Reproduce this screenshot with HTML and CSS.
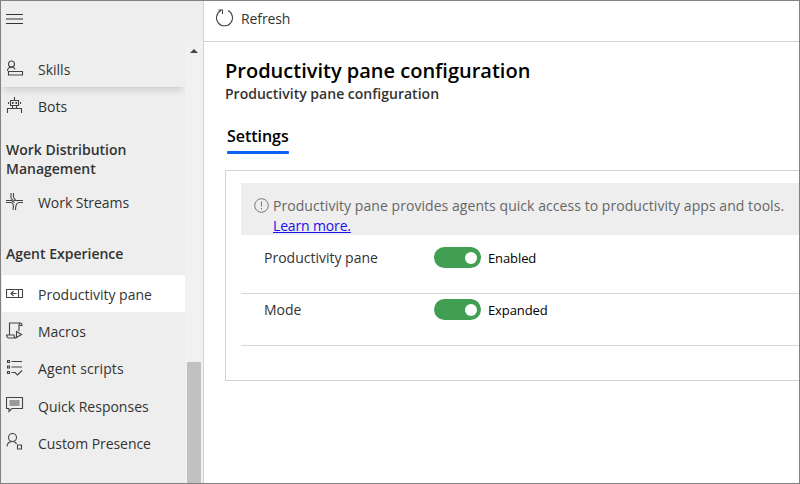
FILE: index.html
```html
<!DOCTYPE html>
<html lang="en">
<head>
<meta charset="utf-8">
<title>Productivity pane configuration</title>
<link rel="stylesheet" href="styles.css">
</head>
<body>
<div class="app">
  <aside class="sidebar">
    <div class="menu-bar">
      <svg class="burger" width="18" height="12" viewBox="0 0 18 12"><path d="M0 1.500h17M0 6h17M0 10.500h17" stroke="#333" stroke-width="1.2"/></svg>
    </div>
    <div class="side-body">
      <nav class="nav">
        <a class="item pinned"><svg class="icon" viewBox="0 0 18 18"><circle cx="5.500" cy="4" r="3"/><path d="M1.500 11C1.500 8.500 3 7.200 5.500 7.200c1.800 0 3 .7 3.700 2"/><path d="M2.500 11.500h14v3.500h-14z"/></svg><span>Skills</span></a>
        <a class="item"><svg class="icon" viewBox="0 0 18 18"><path d="M8.500 0v3.500M4.500 3.500h8v5h-8zM2.500 5v2M14.500 5v2M1.500 16v-4.500h14V16M6.500 8.500v3M10.500 8.500v3"/><path stroke-width="1.800" d="M6 6h1.500M9.500 6h1.500"/></svg><span>Bots</span></a>
        <h2 class="group first">Work Distribution<br>Management</h2>
        <a class="item"><svg class="icon" viewBox="0 0 18 18"><path d="M0 7.500h5.500l3 2M0 9.500h5q3.500.5 2 7.500M5 0v4.500q.5 3 4.500 3H17M7.500 0v3.500q0 1.500 2 3.500M17 9.500h-4q-3.500.5-3.500 7.500"/></svg><span class="wide-less">Work Streams</span></a>
        <h2 class="group second">Agent Experience</h2>
        <a class="item selected"><svg class="icon" viewBox="0 0 18 18"><path d="M.5 4.500h16v8H.5zM12.500 4.500v8M5 8.500h5.500M7.500 6L5 8.500 7.500 11"/></svg><span>Productivity pane</span></a>
        <a class="item"><svg class="icon" viewBox="0 0 18 18"><path d="M3.500 12.500V1H14q2 0 2 2.500H13V9M13 3.500Q13 1 14.500 1M9 16H3q-2 0-2.500-3H8q0 3 2 3M10.500 9.500v6l5-3z"/></svg><span>Macros</span></a>
        <a class="item"><svg class="icon" viewBox="0 0 18 18"><path d="M1.500 1.500h2v2h-2zM1.500 7h2v2h-2zM1.500 12.500h2v2h-2zM5.500 2.500H16M5.500 8H16M5.500 13.500h3.500l2.500 2.500L16 11.500"/></svg><span class="agent-scripts">Agent scripts</span></a>
        <a class="item"><svg class="icon" viewBox="0 0 18 18"><path d="M.5 1.500h16v11H6L3 15.500v-3H.5zM3.500 5h10M3.500 7h10M3.500 9h10"/></svg><span>Quick Responses</span></a>
        <a class="item"><svg class="icon" viewBox="0 0 18 18"><circle cx="6.500" cy="4.500" r="4"/><path d="M1 13.500Q1.500 8.500 6.500 8.500q3 0 4 2.500M11.500 12h4v4h-4z"/></svg><span class="wide-less">Custom Presence</span></a>
      </nav>
      <div class="scrollbar"><div class="arrow"></div><div class="thumb"></div></div>
    </div>
  </aside>
  <main class="main">
    <header class="toolbar">
      <svg width="18" height="18" viewBox="0 0 18 18" class="refresh"><path d="M12 1.600A8 8 0 1 1 5 1.600M2.500 1H6.500V5"/></svg>
      <span class="refresh-label">Refresh</span>
    </header>
    <section class="content">
      <h1>Productivity pane configuration</h1>
      <p class="subtitle">Productivity pane configuration</p>
      <div class="tab">Settings</div>
      <div class="card">
        <div class="info">
          <svg width="15" height="15" viewBox="0 0 15 15" class="alert"><circle cx="7.500" cy="7.500" r="6.800"/><path d="M7.500 3.500v5M7.500 10v1.500"/></svg>
          <div><span class="message">Productivity pane provides agents quick access to productivity apps and tools.</span><br><a class="link">Learn more.</a></div>
        </div>
        <div class="row"><div class="label">Productivity pane</div><div class="toggle"><i></i></div><div class="state">Enabled</div></div>
        <div class="row"><div class="label">Mode</div><div class="toggle"><i></i></div><div class="state">Expanded</div></div>
      </div>
    </section>
  </main>
</div>
</body>
</html>
```
FILE: styles.css
```css
* { box-sizing: border-box; }
body { margin: 0; font-family: "Open Sans", "Noto Sans", sans-serif; font-size: 14px; color: #333; background: #fff; }
h1, h2, p { margin: 0; }
span { white-space: nowrap; }
.app { display: flex; width: 800px; height: 484px; border: 1px solid #828282; overflow: hidden; }
.sidebar { width: 203px; flex: none; background: #eee; border-right: 1px solid #d2d2d2; display: flex; flex-direction: column; }
.menu-bar { height: 40px; padding: 12px 0 0 5px; flex: none; }
.burger { display: block; }
.side-body { flex: 1; display: flex; }
.nav { width: 184px; padding-top: 9px; }
.item { display: flex; align-items: center; height: 37.200px; padding-left: 5px; gap: 14px; }
.item span { padding-top: 2px; }
.icon { width: 18px; height: 18px; flex: none; fill: none; stroke: #444; stroke-width: 1.100; }
.pinned { box-shadow: 0 5px 7px -2px rgba(0,0,0,.14); }
.selected { background: #fff; margin-left: 1px; padding-left: 4px; }
.wide-less { letter-spacing: -.06px; }
.agent-scripts { letter-spacing: .1px; }
.group { font-size: 14px; font-weight: 600; line-height: 19.500px; padding-left: 5px; }
.first { padding-top: 15.500px; height: 58.600px; }
.second { padding-top: 23.500px; height: 54.800px; }
.scrollbar { width: 18px; background: #f1f1f1; display: flex; flex-direction: column; justify-content: space-between; align-items: center; }
.arrow { margin-top: 8px; border: 4px solid transparent; border-top: 0; border-bottom: 4px solid #444; }
.thumb { width: 14px; height: 121px; background: #c1c1c1; }
.main { flex: 1; min-width: 0; }
.toolbar { height: 41px; border-bottom: 1px solid #d2d2d2; padding: 0 0 7px 12px; display: flex; align-items: center; gap: 7px; }
.refresh { fill: none; stroke: #444; stroke-width: 1.100; }
.refresh-label { letter-spacing: -.1px; padding-top: 2px; }
.content { padding: 16px 0 0 21px; }
h1 { font-size: 20px; line-height: 26px; font-weight: 600; color: #000; }
.subtitle { font-size: 14px; font-weight: 600; line-height: 20px; letter-spacing: .01px; }
.tab { width: 62px; margin: 21px 0 0 2px; color: #000; font-size: 16px; font-weight: 600; line-height: 23px; letter-spacing: -.03px; }
.tab::after { content: ""; display: block; height: 3px; margin-top: 3px; border-radius: 1px; background: #0b62f5; }
.card { margin-top: 16px; height: 211px; border: 1px solid #d2d2d2; border-right: 0; padding: 12px 0 0 15px; }
.info { height: 52px; background: #eee; color: #666; display: flex; padding: 13px 0 0 13px; gap: 4px; line-height: 20px; }
.alert { flex: none; margin-top: 2px; fill: none; stroke: #777; stroke-width: 1; }
.message { letter-spacing: .055px; }
.link { color: #1a0dee; text-decoration: underline; letter-spacing: -.15px; }
.row { height: 59px; border-bottom: 1px solid #d6d6d6; display: flex; padding: 12px 0 0 23px; }
.row + .row { height: 52px; padding-top: 5px; }
.label { width: 170px; line-height: 21px; }
.toggle { width: 47px; height: 21px; border-radius: 11px; background: #409f53; display: flex; align-items: center; justify-content: flex-end; padding-right: 4px; }
.toggle i { width: 12px; height: 12px; border-radius: 50%; background: #fff; }
.state { margin-left: 7px; font-size: 13px; color: #000; line-height: 22px; letter-spacing: -.1px; }
```
